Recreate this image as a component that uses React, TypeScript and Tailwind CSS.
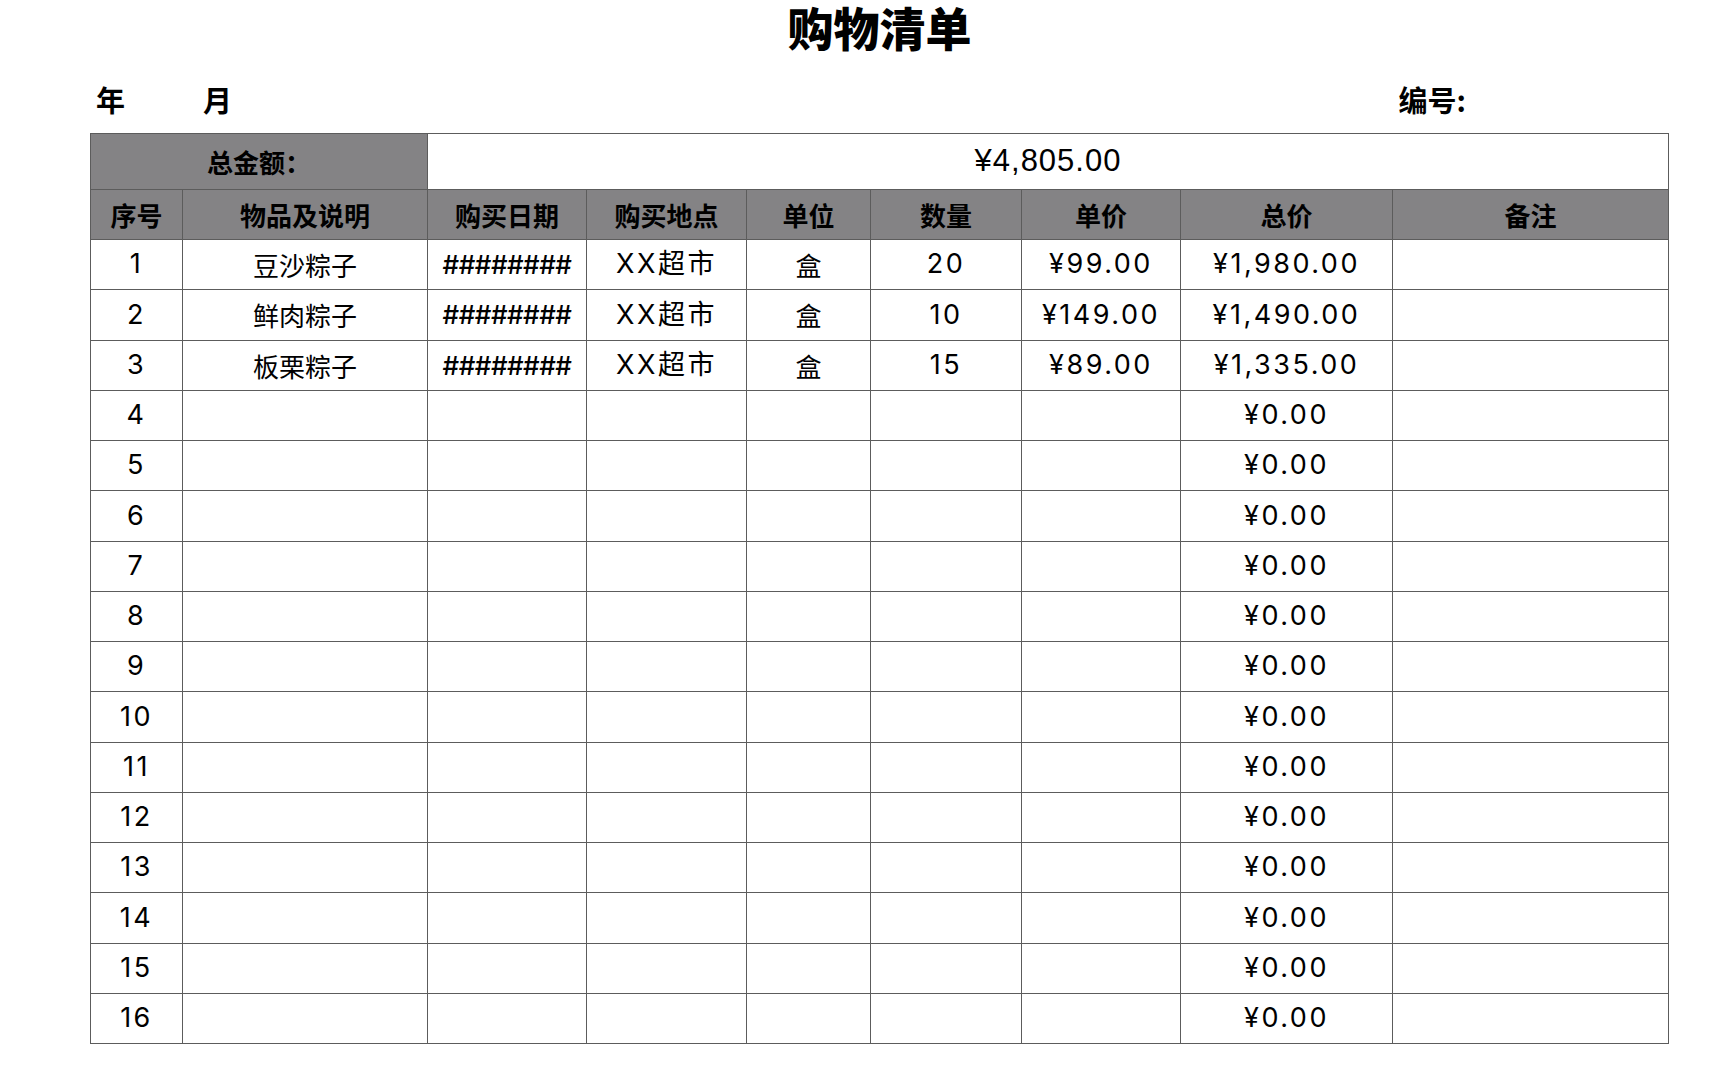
const cols = 'grid grid-cols-[92px_245px_159px_160px_124px_151px_159px_212px_276px]';

const headers = ['序号', '物品及说明', '购买日期', '购买地点', '单位', '数量', '单价', '总价', '备注'];

interface Row {
  no: number;
  name: string;
  date: string;
  place: string;
  unit: string;
  qty: string;
  price: string;
  total: string;
}

const filled: Row[] = [
  { no: 1, name: '豆沙粽子', date: '########', place: 'XX超市', unit: '盒', qty: '20', price: '¥99.00', total: '¥1,980.00' },
  { no: 2, name: '鲜肉粽子', date: '########', place: 'XX超市', unit: '盒', qty: '10', price: '¥149.00', total: '¥1,490.00' },
  { no: 3, name: '板栗粽子', date: '########', place: 'XX超市', unit: '盒', qty: '15', price: '¥89.00', total: '¥1,335.00' },
];

const rows: Row[] = [
  ...filled,
  ...Array.from({ length: 13 }, (_, i) => ({
    no: i + 4,
    name: '',
    date: '',
    place: '',
    unit: '',
    qty: '',
    price: '',
    total: '¥0.00',
  })),
];

const cell = 'flex items-center justify-center border-r border-b border-[#5c5c5c] whitespace-nowrap';
const num = "font-['Inter','Noto_Sans_CJK_SC',sans-serif] text-[27px] tracking-[2.5px]";

const App = () => {
  return (
    <div className="min-h-screen bg-white pl-[90px] text-black font-['Noto_Sans_CJK_SC',sans-serif]">
      <div className="w-[1579px]">
        <div className="flex h-[52px] items-center justify-center">
          <h1 className="text-[46px] font-black leading-[1.1]">购物清单</h1>
        </div>

        <div className="flex h-[81px] items-end pb-[17px] text-[29px] font-bold leading-[1.1]">
          <span className="ml-[6px]">年</span>
          <span className="ml-[78px]">月</span>
          <span className="ml-auto mr-[203px]">编号:</span>
        </div>

        <div className="border-l border-t border-[#5c5c5c]">
          <div className="grid h-[56px] grid-cols-[337px_1241px]">
            <div className={`${cell} bg-[#848385] text-[26px] font-bold`}>总金额：</div>
            <div className={`${cell} font-['Liberation_Sans',sans-serif] text-[31px] tracking-[1px]`}>¥4,805.00</div>
          </div>

          <div className={`${cols} h-[50px]`}>
            {headers.map((h) => (
              <div key={h} className={`${cell} bg-[#848385] text-[26px] font-bold`}>
                {h}
              </div>
            ))}
          </div>

          {rows.map((r) => (
            <div key={r.no} className={`${cols} h-[50.25px] text-[26px]`}>
              <div className={`${cell} ${num}`}>{r.no}</div>
              <div className={cell}>{r.name}</div>
              <div className={`${cell} font-['Inter',sans-serif] font-medium tracking-[-0.5px]`}>{r.date}</div>
              <div className={`${cell} ${num}`}>{r.place}</div>
              <div className={cell}>{r.unit}</div>
              <div className={`${cell} ${num}`}>{r.qty}</div>
              <div className={`${cell} ${num}`}>{r.price}</div>
              <div className={`${cell} ${num}`}>{r.total}</div>
              <div className={cell}></div>
            </div>
          ))}
        </div>
      </div>
    </div>
  );
};

export default App;
